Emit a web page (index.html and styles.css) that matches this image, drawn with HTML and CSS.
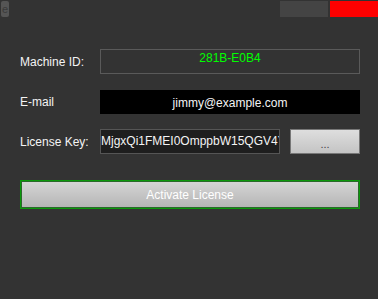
FILE: index.html
```html
<!DOCTYPE html>
<html lang="en">
<head>
    <meta charset="UTF-8">
    <title>License Activation</title>
    <link rel="stylesheet" href="styles.css">
</head>
<body>
    <div class="titlebar">
        <div class="app-badge">e</div>
        <div class="window-buttons">
            <div class="win-btn minimize"></div>
            <div class="win-btn close"></div>
        </div>
    </div>

    <div class="license-form">
        <div class="form-row">
            <label class="field-label">Machine ID:</label>
            <div class="field machine-id">281B-E0B4</div>
        </div>
        <div class="form-row">
            <label class="field-label">E-mail</label>
            <div class="field email">jimmy@example.com</div>
        </div>
        <div class="form-row">
            <label class="field-label">License Key:</label>
            <div class="key-group">
                <div class="field license-key">MjgxQi1FMEI0OmppbW15QGV4Y</div>
                <button class="browse-btn">...</button>
            </div>
        </div>
        <button class="activate-btn">Activate License</button>
    </div>
</body>
</html>
```

FILE: styles.css
```css
* {
    margin: 0;
    padding: 0;
    box-sizing: border-box;
}

body {
    background: #333333;
    font-family: 'Liberation Sans', Arial, sans-serif;
    font-size: 12px;
    color: #f0f0f0;
    width: 378px;
    height: 299px;
    overflow: hidden;
}

.titlebar {
    display: flex;
    justify-content: space-between;
    padding-top: 1px;
    padding-left: 1px;
    height: 17px;
}

.app-badge {
    width: 8px;
    height: 16px;
    background: #555555;
    border-radius: 2px;
    color: #3a3a3a;
    font-size: 11px;
    line-height: 16px;
    text-align: center;
    overflow: hidden;
}

.window-buttons {
    display: flex;
    gap: 2px;
}

.win-btn {
    width: 48px;
    height: 16px;
}

.minimize {
    background: #444444;
}

.close {
    background: #ff0000;
}

.license-form {
    display: flex;
    flex-direction: column;
    gap: 15px;
    padding: 32px 18px 0 20px;
}

.form-row {
    display: flex;
    align-items: center;
    height: 25px;
}

.field-label {
    width: 80px;
    flex-shrink: 0;
    color: #f4f4f4;
}

.field {
    flex: 1;
    min-width: 0;
    height: 25px;
    overflow: hidden;
    white-space: nowrap;
}

.machine-id {
    border: 1px solid #5a5a5a;
    color: #00ff00;
    text-align: center;
    line-height: 12px;
    padding-top: 2px;
}

.email {
    background: #000000;
    color: #f4f4f4;
    text-align: center;
    line-height: 24px;
    padding-top: 1px;
    height: 24px;
}

.key-group {
    flex: 1;
    min-width: 0;
    display: flex;
    gap: 10px;
    height: 25px;
}

.license-key {
    background: #1e1e1e;
    border: 1px solid #555555;
    color: #f4f4f4;
    line-height: 23px;
}

.browse-btn {
    width: 70px;
    height: 25px;
    flex-shrink: 0;
    background: linear-gradient(#dedede, #c4c4c4);
    border: 1px solid #777777;
    color: #444444;
    font-family: 'Liberation Sans', Arial, sans-serif;
    font-size: 11px;
    padding-top: 4px;
}

.activate-btn {
    margin-top: 11px;
    height: 29px;
    background: linear-gradient(#d6d6d6, #b4b4b4);
    border: 1px solid #0b9a0b;
    box-shadow: inset 0 0 0 1px #2a6a2a;
    color: #ffffff;
    font-family: 'Liberation Sans', Arial, sans-serif;
    font-size: 12px;
}
```
